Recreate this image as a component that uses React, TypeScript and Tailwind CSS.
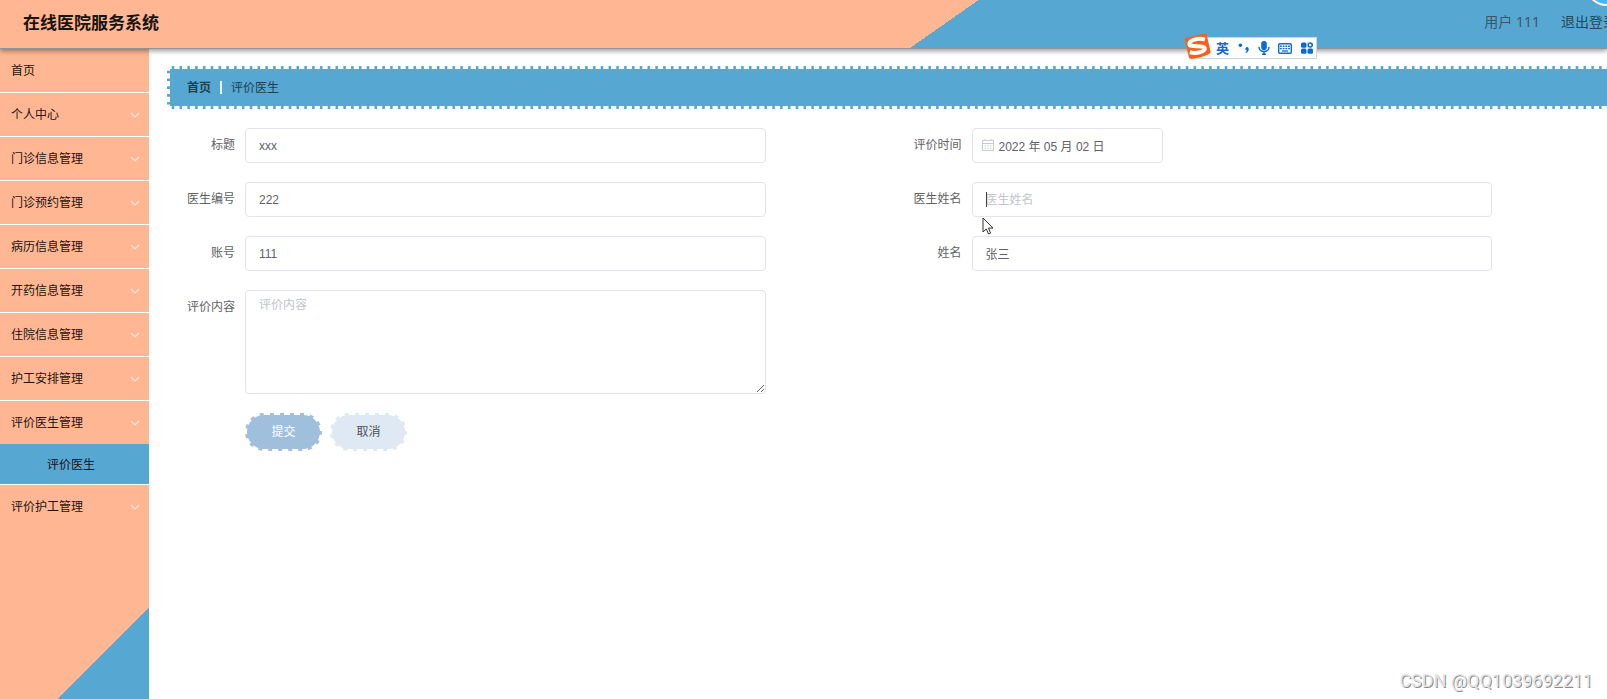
import React from 'react';

const menu = [
  { label: '首页', expandable: false },
  { label: '个人中心', expandable: true },
  { label: '门诊信息管理', expandable: true },
  { label: '门诊预约管理', expandable: true },
  { label: '病历信息管理', expandable: true },
  { label: '开药信息管理', expandable: true },
  { label: '住院信息管理', expandable: true },
  { label: '护工安排管理', expandable: true },
  { label: '评价医生管理', expandable: true, children: ['评价医生'] },
  { label: '评价护工管理', expandable: true },
];

const inputClass =
  'block h-[35px] w-full rounded border border-[#e2e4ec] bg-white px-[13px] text-xs text-[#606266] outline-none placeholder:text-[#c0c4cc]';

const Chevron = () => (
  <svg className="h-[6px] w-[10px]" viewBox="0 0 10 6" fill="none" stroke="#ffe6da" strokeWidth="1.2">
    <path d="M1 1l4 4 4-4" />
  </svg>
);

const Field = ({ id, label, children }: { id: string; label: string; children: React.ReactNode }) => (
  <div className="flex pr-32">
    <label htmlFor={id} className="w-[78px] shrink-0 pr-[10px] text-right text-xs leading-[35px] text-[#606266]">
      {label}
    </label>
    <div className="relative min-w-0 flex-1">{children}</div>
  </div>
);

const Header = () => (
  <header className="relative z-10 flex h-[49px] items-center justify-between border-b border-[#8e9499] bg-[linear-gradient(145deg,#ffb793_58.4%,#57a7d3_58.4%)] pl-[23px] shadow-[0_2px_5px_rgba(0,0,0,0.4)]">
    <h1 className="pb-[2px] text-[17px] font-bold text-[#1a1410]">在线医院服务系统</h1>
    <div className="-mr-[10px] flex shrink-0 gap-[21px] pb-1 text-sm text-[#3d5566]">
      <span>用户 111</span>
      <a href="#logout" className="text-[#24475c]">退出登录</a>
    </div>
    {/* Floating ball peeking in from the corner */}
    <div className="absolute -top-[38px] -right-[22px] size-11 rounded-full border-2 border-white bg-[#49b4f5]"></div>
  </header>
);

const Sidebar = () => (
  <nav className="w-[149px] shrink-0 bg-[linear-gradient(315deg,#57a7d3_65px,#ffb793_65px)] text-xs text-[#1a1410]">
    <ul>
      {menu.map((item, i) => (
        <li key={item.label} className={i < menu.length - 1 ? 'border-b border-white' : ''}>
          <a href="#menu" className="flex h-[43px] items-center justify-between pr-[9px] pl-[11px]">
            {item.label}
            {item.expandable && <Chevron />}
          </a>
          {item.children?.map((child) => (
            <a key={child} href="#rate-doctor" className="flex h-10 items-center justify-center bg-[#57a7d3] pt-[2px] pr-[7px]">
              {child}
            </a>
          ))}
        </li>
      ))}
    </ul>
  </nav>
);

const Breadcrumb = () => (
  <div className="relative flex h-[43px] items-center bg-[#57a7d3] pl-5 text-xs text-[#20404f]">
    {/* Stitched edge */}
    <svg className="pointer-events-none absolute inset-0 h-full w-full" stroke="#fff" strokeWidth="6" strokeDasharray="5.2 2.6" strokeDashoffset="0.5">
      <line x1="0" y1="0" x2="100%" y2="0" />
      <line x1="0" y1="100%" x2="100%" y2="100%" />
      <line x1="0" y1="0" x2="0" y2="100%" />
    </svg>
    <a href="#home" className="font-bold">首页</a>
    <span className="mx-[9px] h-[13px] w-[2px] bg-[#e9f6fc]"></span>
    <span>评价医生</span>
  </div>
);

const CalendarIcon = () => (
  <svg className="absolute top-[11px] left-[10px] size-3" viewBox="0 0 12 12" fill="none" stroke="#c8ccd4">
    <rect x="0.5" y="1.5" width="11" height="10" />
    <path d="M0.5 4.5h11M3 0v2M9 0v2" />
    <path d="M2.5 6.8h7M2.5 9.2h7" strokeDasharray="1.4 1.4" />
  </svg>
);

const ImeBar = () => (
  <div className="absolute top-[33px] right-[290px] z-20">
    <div className="mt-1 flex h-[22px] w-[120px] items-center justify-between border border-[#c5d8ec] bg-white pr-[3px] pl-[18px] text-[#0a6ad6]">
      <span className="text-[13px] leading-none font-bold">英</span>
      <svg className="size-3" viewBox="0 0 12 12" fill="currentColor">
        <circle cx="2.4" cy="3.2" r="1.8" />
        <path d="M8.7 5a1.9 1.9 0 0 1 2 2c0 2-1 3.5-3 4l-.3-1c1-.4 1.4-.8 1.4-1.5A1.8 1.8 0 0 1 8.7 5z" />
      </svg>
      <svg className="h-[14px] w-3" viewBox="0 0 12 14">
        <rect x="3.2" y="0" width="5.6" height="9" rx="2.8" fill="currentColor" />
        <path d="M1 6c0 6 10 6 10 0M6 10.5v3M4 13.3h4" fill="none" stroke="currentColor" strokeWidth="1.5" />
      </svg>
      <svg className="h-[11px] w-[14px]" viewBox="0 0 14 11">
        <rect x="0.7" y="0.7" width="12.6" height="9.6" rx="1.2" fill="none" stroke="currentColor" strokeWidth="1.4" />
        <path d="M2 3.3h10M2 5.6h10" stroke="currentColor" strokeWidth="1.4" strokeDasharray="1.8 0.9" />
        <path d="M4 8h6" stroke="currentColor" strokeWidth="1.3" />
      </svg>
      <svg className="size-3" viewBox="0 0 12 12" fill="currentColor">
        <rect x="0" y="0.5" width="5.5" height="5.2" rx="1.5" />
        <circle cx="9.2" cy="3" r="2" fill="none" stroke="currentColor" strokeWidth="1.6" />
        <rect x="0" y="6.6" width="5.5" height="5.2" rx="1.5" />
        <rect x="6.5" y="6.6" width="5.5" height="5.2" rx="1.5" />
      </svg>
    </div>
    <svg className="absolute top-0 -left-[13px] size-[27px]" viewBox="0 0 27 27">
      <path d="M2.5 4.8L20.5.6c1.2-.3 1.9.2 2.2 1.3L26.500 18c.3 1.3-.2 2.6-1.5 3.1C20 23.500 14 25.700 7.500 26c-1.500 0-2.400-.6-2.700-1.900L.8 7.300C.5 6 1.200 5.100 2.500 4.800z" fill="#fa5f1c" />
      <path d="M21 6.500C14 4.500 5 7.200 5.400 11.200c.3 3.600 14.800.4 15.400 4.100.4 3.700-8.800 5.600-15 3.900" fill="none" stroke="#fff" strokeWidth="4" />
    </svg>
  </div>
);

const App = () => {
  return (
    <div className="relative flex min-h-screen flex-col overflow-hidden bg-white font-['Noto_Sans','Noto_Sans_CJK_SC',sans-serif]">
      <Header />
      <ImeBar />

      <div className="flex flex-1">
        <Sidebar />

        <main className="-mr-[13px] min-w-0 flex-1 pt-[17px] pl-[18px]">
          <Breadcrumb />

          <form className="mt-[19px] grid grid-cols-2 gap-y-[19px] font-['Liberation_Sans','Noto_Sans_CJK_SC',sans-serif]">
            <Field id="title" label="标题">
              <input id="title" className={inputClass} defaultValue="xxx" />
            </Field>
            <Field id="date" label="评价时间">
              <div className="relative w-[191px]">
                <input id="date" className={`${inputClass} pl-[26px]`} defaultValue="2022 年 05 月 02 日" />
                <CalendarIcon />
              </div>
            </Field>
            <Field id="doctor-no" label="医生编号">
              <input id="doctor-no" className={inputClass} defaultValue="222" />
            </Field>
            <Field id="doctor-name" label="医生姓名">
              <input id="doctor-name" className={inputClass} placeholder="医生姓名" />
              {/* Text caret and mouse pointer */}
              <span className="absolute top-[10px] left-[14px] h-[15px] w-px bg-[#404246]"></span>
              <svg className="absolute top-[35px] left-[10px] z-10 h-[18px] w-3" viewBox="0 0 12 18">
                <path d="M1 1v14l3.3-3 2.3 5 2-.9-2.2-5H11z" fill="#fff" stroke="#333" />
              </svg>
            </Field>
            <Field id="account" label="账号">
              <input id="account" className={inputClass} defaultValue="111" />
            </Field>
            <Field id="name" label="姓名">
              <input id="name" className={inputClass} defaultValue="张三" />
            </Field>
            <Field id="content" label="评价内容">
              <textarea
                id="content"
                placeholder="评价内容"
                className="block h-[104px] w-full resize rounded border border-[#e2e4ec] px-[13px] py-1 text-xs leading-5 text-[#606266] outline-none placeholder:text-[#c0c4cc]"
              />
            </Field>
            <div className="col-span-2 flex gap-2 pl-[78px] text-xs">
              <button type="button" className="h-[38px] w-[77px] rounded-[20px] border-2 border-dashed border-white bg-[#a0bfdc] text-white">
                提交
              </button>
              <button type="button" className="h-[38px] w-[77px] rounded-[20px] border-2 border-dashed border-white bg-[#dfe9f4] text-[#505256]">
                取消
              </button>
            </div>
          </form>
        </main>
      </div>

      <p className="absolute right-[14px] bottom-1 font-['Roboto',sans-serif] text-lg text-[#e4e4e4] [text-shadow:1px_1px_0_#8c8c8c]">
        CSDN @QQ1039692211
      </p>
    </div>
  );
};

export default App;
